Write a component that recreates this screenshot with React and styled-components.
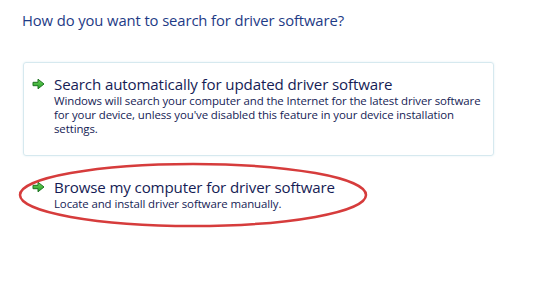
import React from "react";
import styled, { createGlobalStyle } from "styled-components";

const Global = createGlobalStyle`
  html, body { margin: 0; padding: 0; background: #ffffff; }
  body { font-family: "Open Sans", "Noto Sans", sans-serif; }
`;

const Page = styled.div`
  width: 537px;
  height: 288px;
  padding: 10px 0 0 22px;
  box-sizing: border-box;
  display: flex;
  flex-direction: column;
`;

const Heading = styled.h1`
  margin: 0;
  font-size: 14.8px;
  font-weight: 400;
  color: #1e3b86;
  line-height: 21px;
  letter-spacing: -0.1px;
`;

const Options = styled.div`
  display: flex;
  flex-direction: column;
  margin-top: 31px;
  margin-left: 1px;
  width: 471px;
  gap: 8px;
`;

const Option = styled.div`
  position: relative;
  display: flex;
  align-items: flex-start;
  gap: 9px;
  padding: ${(p) => (p.$boxed ? "11px 12px 19px 7px" : "12px 12px 10px 7px")};
  border: 1px solid ${(p) => (p.$boxed ? "#d6e9ef" : "transparent")};
  border-radius: 3px;
  box-shadow: ${(p) => (p.$boxed ? "0 0 2px rgba(200,225,235,0.6)" : "none")};
`;

const ArrowWrap = styled.div`
  width: 14px;
  height: 20px;
  display: flex;
  align-items: center;
  justify-content: center;
  flex-shrink: 0;
`;

const Text = styled.div`
  display: flex;
  flex-direction: column;
  white-space: nowrap;
`;

const Title = styled.div`
  font-size: 15.1px;
  color: #151c55;
  line-height: 20px;
  letter-spacing: -0.12px;
`;

const Desc = styled.div`
  font-size: 11.45px;
  color: #151c55;
  line-height: 14px;
  letter-spacing: -0.1px;
`;

const Ellipse = styled.svg`
  position: absolute;
  left: -6px;
  top: -2px;
  pointer-events: none;
  overflow: visible;
`;

const Arrow = () => (
  <svg width="13" height="12" viewBox="0 0 13 12">
    <defs>
      <linearGradient id="ag" x1="0" y1="0" x2="0" y2="1">
        <stop offset="0" stopColor="#6fd35a" />
        <stop offset="1" stopColor="#25a02a" />
      </linearGradient>
    </defs>
    <path
      d="M1 4.3 H6 V1.2 L12 6 L6 10.8 V7.7 H1 Z"
      fill="url(#ag)"
      stroke="#1d7420"
      strokeWidth="1"
      strokeLinejoin="round"
    />
  </svg>
);

export default function App() {
  return (
    <>
      <Global />
      <Page>
        <Heading>How do you want to search for driver software?</Heading>
        <Options>
          <Option $boxed>
            <ArrowWrap>
              <Arrow />
            </ArrowWrap>
            <Text>
              <Title>Search automatically for updated driver software</Title>
              <Desc>
                Windows will search your computer and the Internet for the latest driver software
                <br />
                for your device, unless you've disabled this feature in your device installation
                <br />
                settings.
              </Desc>
            </Text>
          </Option>
          <Option>
            <ArrowWrap>
              <Arrow />
            </ArrowWrap>
            <Text>
              <Title>Browse my computer for driver software</Title>
              <Desc>Locate and install driver software manually.</Desc>
            </Text>
            <Ellipse width="350" height="64" viewBox="0 0 350 64">
              <ellipse cx="175" cy="32" rx="173" ry="31" fill="none" stroke="#d63c3c" strokeWidth="2.5" />
            </Ellipse>
          </Option>
        </Options>
      </Page>
    </>
  );
}
